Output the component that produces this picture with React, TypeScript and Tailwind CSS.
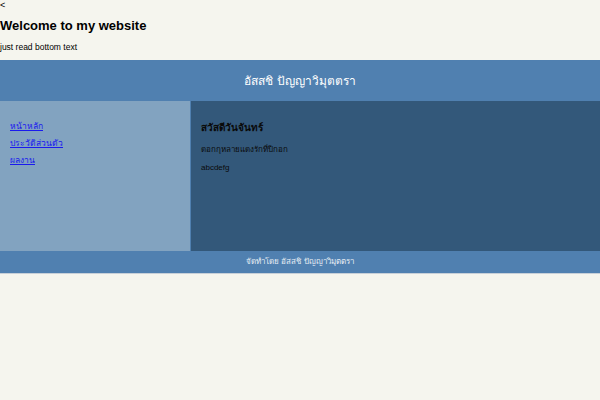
export default function App() {
  return (
    <div className="min-h-[400px] bg-[#f5f5ee] text-black font-['Liberation_Sans',sans-serif]">
      <div className="text-[9px] leading-[10px]">&lt;</div>
      <h1 className="mt-[8px] text-[13px] font-bold leading-[16px]">Welcome to my website</h1>
      <p className="mt-[8px] text-[8.5px] leading-[10px]">just read bottom text</p>

      {/* header */}
      <header className="mt-[8px] flex h-[41px] items-center justify-center bg-[#5080b0] text-[12px] text-white">
        อัสสชิ ปัญญาวิมุตตรา
      </header>

      <div className="flex h-[150px]">
        {/* sidebar */}
        <nav className="flex w-[190px] flex-col gap-[7px] bg-[#82a3c0] px-[10px] pt-[20px] text-[8.5px] leading-[10px]">
          <a href="#" className="text-[#1a1aee] underline">หน้าหลัก</a>
          <a href="#" className="text-[#1a1aee] underline">ประวัติส่วนตัว</a>
          <a href="#" className="text-[#1a1aee] underline">ผลงาน</a>
        </nav>
        {/* main */}
        <main className="flex-1 border-l border-[#5080b0] bg-[#33587a] px-[10px] pt-[20px] text-[#0a0a0a]">
          <h2 className="text-[10px] font-semibold leading-[14px]">สวัสดีวันจันทร์</h2>
          <p className="mt-[10px] text-[8px] leading-[10px]">ดอกกุหลายแดงรักที่ปีกอก</p>
          <p className="mt-[8px] text-[8px] leading-[10px]">abcdefg</p>
        </main>
      </div>

      {/* footer */}
      <footer className="flex h-[23px] items-center justify-center border-b border-[#c8d0d8] bg-[#5080b0] text-[8px] text-[#e8eef4]">
        จัดทำโดย อัสสชิ ปัญญาวิมุตตรา
      </footer>
    </div>
  );
}
